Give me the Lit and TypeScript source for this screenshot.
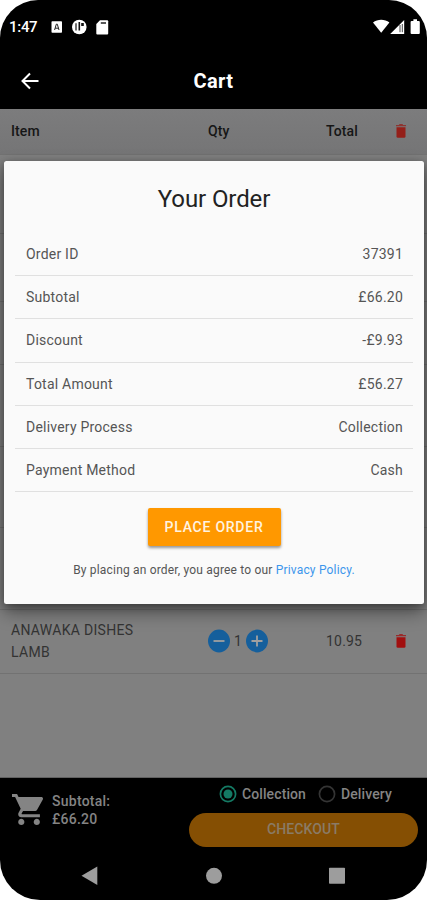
import { LitElement, html, css, svg } from "lit";
import { customElement } from "lit/decorators.js";

const orderLines: [string, string][] = [
  ["Order ID", "37391"],
  ["Subtotal", "£66.20"],
  ["Discount", "-£9.93"],
  ["Total Amount", "£56.27"],
  ["Delivery Process", "Collection"],
  ["Payment Method", "Cash"],
];

// Heights of the cart rows that sit behind the dialog.
const coveredRows = [79, 68, 63, 82, 81, 82];

const trash = html`<svg class="trash" width="12" height="16" viewBox="0 0 12 16">
  ${svg`<path d="M1.5 4.2h9v9.3a1.3 1.3 0 0 1-1.3 1.3H2.8a1.3 1.3 0 0 1-1.3-1.3z" fill="currentColor"/><path d="M1 2h2.8L4.6 1.1h2.8l.8.9H11v1.2H1z" fill="currentColor" opacity=".75"/>`}
</svg>`;

@customElement("status-bar")
class StatusBar extends LitElement {
  static styles = css`
    :host { display: flex; align-items: center; height: 53px; padding: 0 6px 0 9px; color: #fff; box-sizing: border-box; }
    .time { font-size: 15px; font-weight: 500; letter-spacing: -0.3px; width: 42px; line-height: 20px; }
    svg { display: block; }
    .gap { flex: 1; }
  `;
  render() {
    return html`
      <span class="time">1:47</span>
      <svg width="60" height="18" viewBox="0 0 60 18">
        <rect x="0.5" y="3.2" width="10.5" height="11.6" rx="0.8" fill="#fff" />
        <path d="M3.6 12 5.3 6.2h1L8 12M4.2 10.2h3.2" fill="none" stroke="#222" stroke-width="1" />
        <circle cx="28.3" cy="9" r="7.3" fill="#fff" />
        <path d="M25 5.2v7.2" fill="none" stroke="#111" stroke-width="1.2" />
        <path d="M28.3 4v8.6" fill="none" stroke="#111" stroke-width="1.6" />
        <rect x="30.2" y="5" width="2.6" height="3" fill="#111" />
        <path d="M49 2.2h7.2a1 1 0 0 1 1 1v12.3a1 1 0 0 1-1 1H46.3a1 1 0 0 1-1-1V6z" fill="#fff" />
        <path d="M49.8 5h5.2" stroke="#222" stroke-width="1.3" />
      </svg>
      <span class="gap"></span>
      <svg width="48" height="18" viewBox="0 0 48 18">
        <path d="M0 4.4C4.6.9 11.8.9 16.4 4.4L8.2 14.8z" fill="#fff" />
        <path d="M31.2 1.9v14H17.2z" fill="#fff" />
        <path d="M27 7v7.2M29.3 6v8.2" stroke="#333" stroke-width="0.9" />
        <path d="M38.6 3h1.8V1.2h3.6V3h1.8a1 1 0 0 1 1 1v11a1 1 0 0 1-1 1h-7.2a1 1 0 0 1-1-1V4a1 1 0 0 1 1-1z" fill="#fff" />
      </svg>
    `;
  }
}

@customElement("order-dialog")
class OrderDialog extends LitElement {
  static styles = css`
    :host { display: flex; flex-direction: column; align-items: center; box-sizing: border-box; height: 443px; padding: 24px 11px 0; background: #fafafa; border-radius: 2.5px; box-shadow: 0 8px 18px rgba(0,0,0,.42), 0 2px 8px rgba(0,0,0,.3); color: #555; }
    h2 { margin: 0 0 20px; font-size: 24px; line-height: 28px; font-weight: 400; color: #222; letter-spacing: -0.1px; }
    .lines { align-self: stretch; }
    .line { display: flex; justify-content: space-between; height: 43.2px; box-sizing: border-box; align-items: center; padding: 0 10px 0 11px; border-bottom: 1px solid #e0e0e0; font-size: 14px; letter-spacing: 0.22px; }
    .place { margin: 16px 0 0; width: 133px; height: 38px; border: 0; border-radius: 2px; background: #ff9800; color: #fff3e0; font: 500 14px Roboto, sans-serif; letter-spacing: 0.75px; padding: 0 0 1px; box-shadow: 0 2px 3px rgba(0,0,0,.4); }
    p { margin: 16px 0 0; font-size: 12px; line-height: 16px; letter-spacing: 0.18px; white-space: nowrap; color: #555; }
    .link { color: #3c96ec; }
  `;
  render() {
    return html`
      <h2>Your Order</h2>
      <div class="lines">
        ${orderLines.map(([k, v]) => html`<div class="line"><span>${k}</span><span>${v}</span></div>`)}
      </div>
      <button class="place">PLACE ORDER</button>
      <p>By placing an order, you agree to our <span class="link">Privacy Policy.</span></p>
    `;
  }
}

@customElement("app-root")
class AppRoot extends LitElement {
  static styles = css`
    :host { display: block; width: 427px; height: 900px; background: #fff; font-family: Roboto, sans-serif; }
    .phone { position: relative; display: flex; flex-direction: column; height: 900px; background: #000; border-radius: 38px 38px 40px 40px; overflow: hidden; }
    svg { display: block; }
    .bar { display: grid; grid-template-columns: 60px 1fr 60px; align-items: center; height: 56px; color: #fff; }
    .back { margin: -1px 0 0 20px; }
    .name { text-align: center; font-size: 20px; line-height: 24px; font-weight: 700; letter-spacing: 0.35px; }
    .content { flex: 0 0 669px; background: #808080; border-bottom: 1px solid #606060; box-sizing: border-box; }
    .row { display: grid; grid-template-columns: 197px 118px 70px 1fr; align-items: center; padding-left: 11px; box-sizing: border-box; border-bottom: 1px solid #727272; }
    .head { height: 46px; padding-bottom: 1px; background: linear-gradient(#7c7c7d, #757576); font-size: 14px; font-weight: 500; color: #161616; letter-spacing: 0.1px; }
    .dish { height: 64px; padding-bottom: 2px; font-size: 14px; letter-spacing: 0.2px; color: #333; }
    .dish-name { line-height: 21.5px; letter-spacing: 0.3px; padding-top: 2px; width: 150px; }
    .trash { color: #941f19; margin-left: -1px; }
    .dish .trash { color: #a10f0f; }
    .qty { display: flex; align-items: center; gap: 4px; }
    .footer { display: flex; height: 74px; padding: 2px 9px 0 11px; box-sizing: border-box; color: #848484; font-size: 14px; font-weight: 500; }
    .cart { margin: 14px 1px 0 1px; }
    .sub { width: 137px; margin: 12px 0 0 8px; line-height: 18px; letter-spacing: 0.25px; }
    .actions { flex: 1; }
    .modes { display: flex; align-items: center; height: 28px; padding-left: 30px; gap: 5px; letter-spacing: 0.1px; }
    .modes .second { margin-left: 7px; }
    .checkout { display: block; margin-top: 5px; width: 229px; height: 34px; border: 0; border-radius: 17px; background: #854f03; color: #8a7b66; font: 500 14px Roboto, sans-serif; padding: 0 0 2px; letter-spacing: 0.1px; }
    .modal { position: absolute; left: 4px; top: 161px; width: 420px; }
  `;
  private step(plus: boolean) {
    return html`<svg width="22" height="24" viewBox="0 0 22 24">
      <ellipse cx="11" cy="12" rx="11" ry="11.4" fill="#155f9c" />
      <path d=${plus ? "M5.5 12h11M11 6.5v11" : "M5.5 12h11"} stroke="#a0a0a0" stroke-width="1.8" />
    </svg>`;
  }
  private radio(on: boolean) {
    return html`<svg class=${on ? "first" : "second"} width="18" height="18" viewBox="0 0 18 18">
      <circle cx="9" cy="9" r="7.6" fill="none" stroke=${on ? "#147a64" : "#343434"} stroke-width="1.7" />
      ${on ? svg`<circle cx="9" cy="9" r="4.5" fill="#147a64" />` : null}
    </svg>`;
  }
  render() {
    return html`
      <div class="phone">
        <status-bar></status-bar>
        <div class="bar">
          <svg class="back" width="20" height="18" viewBox="0 0 20 18"><path d="M18.5 9H2.5M10 1.5 2.5 9l7.5 7.5" fill="none" stroke="#fff" stroke-width="2" /></svg>
          <span class="name">Cart</span>
        </div>
        <div class="content">
          <div class="row head"><span>Item</span><span>Qty</span><span>Total</span>${trash}</div>
          ${coveredRows.map((h) => html`<div class="row" style="height:${h}px"></div>`)}
          <div class="row dish">
            <span class="dish-name">ANAWAKA DISHES LAMB</span>
            <span class="qty">${this.step(false)}<span>1</span>${this.step(true)}</span>
            <span>10.95</span>${trash}
          </div>
        </div>
        <div class="footer">
          <svg class="cart" width="31" height="31" viewBox="1 2 20 20" fill="#848484">
            <path d="M7 18c-1.1 0-1.99.9-1.99 2S5.9 22 7 22s2-.9 2-2-.9-2-2-2z" />
            <path d="M17 18c-1.1 0-1.99.9-1.99 2s.89 2 1.99 2 2-.9 2-2-.9-2-2-2z" />
            <path d="M1 2v2h2l3.6 7.59-1.35 2.45c-.16.28-.25.61-.25.96 0 1.1.9 2 2 2h12v-2H7.42c-.14 0-.25-.11-.25-.25l.03-.12.9-1.63h7.45c.75 0 1.41-.41 1.75-1.03l3.58-6.49A1 1 0 0 0 20.1 4H5.21l-.94-2z" />
          </svg>
          <div class="sub">Subtotal:<br />£66.20</div>
          <div class="actions">
            <div class="modes">
              ${this.radio(true)}<span>Collection</span>
              ${this.radio(false)}<span>Delivery</span>
            </div>
            <button class="checkout">CHECKOUT</button>
          </div>
        </div>
        <svg width="427" height="48" viewBox="0 0 427 48" fill="#9d9d9d">
          <path d="M97.3 14.5v18.6L81.5 23.8z" /><circle cx="214" cy="23.8" r="8" /><rect x="329" y="15.8" width="16" height="16" rx="0.8" />
        </svg>
        <order-dialog class="modal"></order-dialog>
      </div>
    `;
  }
}
